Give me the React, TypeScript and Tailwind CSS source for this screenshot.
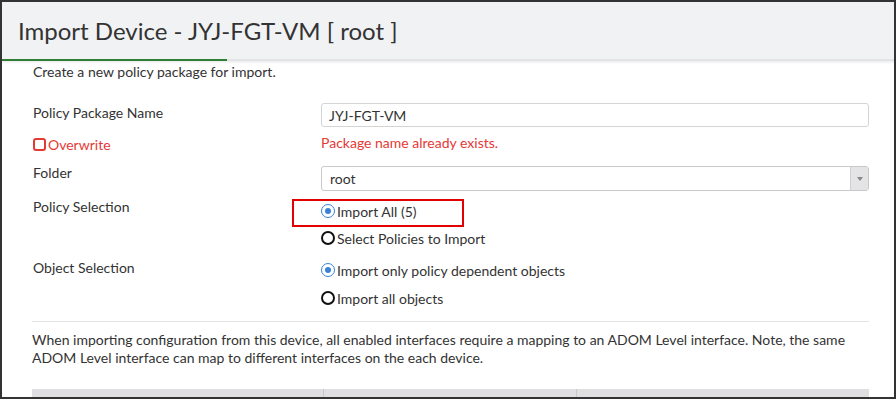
import React from 'react';

const font = { fontFamily: 'Lato, "Liberation Sans", sans-serif' };

const Radio: React.FC<{ checked?: boolean; label: string }> = ({ checked, label }) => (
  <label className="flex items-center text-[14px] text-[#333]">
    {checked ? (
      <span className="w-[14px] h-[14px] rounded-full border-[1.5px] border-[#3b82d6] flex items-center justify-center mr-[2px]">
        <span className="w-[6px] h-[6px] rounded-full bg-[#3b82d6]" />
      </span>
    ) : (
      <span className="w-[14px] h-[14px] rounded-full border-2 border-[#111] mr-[2px]" />
    )}
    {label}
  </label>
);

export default function App() {
  return (
    <div style={font} className="w-[896px] h-[399px] border-2 border-[#333] bg-white overflow-hidden flex flex-col">
      <div className="h-[57px] shrink-0 bg-[#f1f2f4] flex items-center pl-[16px]">
        <h1 className="text-[24px] text-[#333] font-normal leading-none">Import Device - JYJ-FGT-VM [ root ]</h1>
      </div>
      <div className="h-[2px] shrink-0 bg-[#e2e3e5] flex">
        <div className="w-[225px] bg-[#2e7d32]" />
      </div>
      <div className="h-[3px] shrink-0 bg-gradient-to-b from-[#ececee] to-white" />

      <div className="pl-[31px] pr-[25px] text-[14px] text-[#333]">
        <p className="leading-[18px] -mt-[1px]">Create a new policy package for import.</p>

        <div className="grid grid-cols-[288px_1fr] mt-[22px]">
          <div className="h-[24px] leading-[18px] pt-[1px]">Policy Package Name</div>
          <div className="h-[24px] border border-[#d4d4d4] rounded-[3px] flex items-center px-[7px]">JYJ-FGT-VM</div>

          <div className="h-[34px] flex items-center text-[#e53935]">
            <span className="w-[13px] h-[13px] border-2 border-[#e53935] rounded-[3px] mr-[2px]" />
            Overwrite
          </div>
          <div className="h-[34px] flex items-center text-[#e53935] -mt-[2px]">Package name already exists.</div>

          <div className="h-[5px] col-span-2" />

          <div className="leading-[18px] -mt-[2px]">Folder</div>
          <div className="h-[25px] border border-[#c9c9c9] rounded-[3px] flex items-stretch">
            <div className="flex-1 flex items-center px-[8px]">root</div>
            <div className="w-[18px] bg-[#e4e4e6] border-l border-[#d0d0d0] flex items-center justify-center">
              <svg width="6" height="4" viewBox="0 0 6 4"><path d="M0 0h6L3 4z" fill="#888" /></svg>
            </div>
          </div>

          <div className="pt-[7px] leading-[18px]">Policy Selection</div>
          <div className="relative pt-[12px]">
            <div className="absolute left-[-29px] top-[8px] w-[172px] h-[28px] border-2 border-[#e30000]" />
            <div className="h-[16px] flex items-center"><Radio checked label="Import All (5)" /></div>
            <div className="h-[16px] flex items-center mt-[11px]"><Radio label="Select Policies to Import" /></div>
          </div>

          <div className="pt-[13px] leading-[18px]">Object Selection</div>
          <div className="pt-[16px]">
            <div className="h-[16px] flex items-center"><Radio checked label="Import only policy dependent objects" /></div>
            <div className="h-[16px] flex items-center mt-[12px]"><Radio label="Import all objects" /></div>
          </div>
        </div>

        <div className="h-px bg-[#e3e3e3] mt-[15px] -ml-[1px]" />
        <p className="leading-[18px] mt-[9px] -ml-[1px]">
          When importing configuration from this device, all enabled interfaces require a mapping to an ADOM Level interface. Note, the same ADOM Level interface can map to different interfaces on the each device.
        </p>
        <div className="mt-[22px] -ml-[1px] h-[12px] bg-[#dfdfe1] grid grid-cols-[292px_253px_1fr]">
          <div className="border-r border-[#c8c8c8]" />
          <div className="border-r border-[#c8c8c8]" />
          <div />
        </div>
      </div>
    </div>
  );
}
